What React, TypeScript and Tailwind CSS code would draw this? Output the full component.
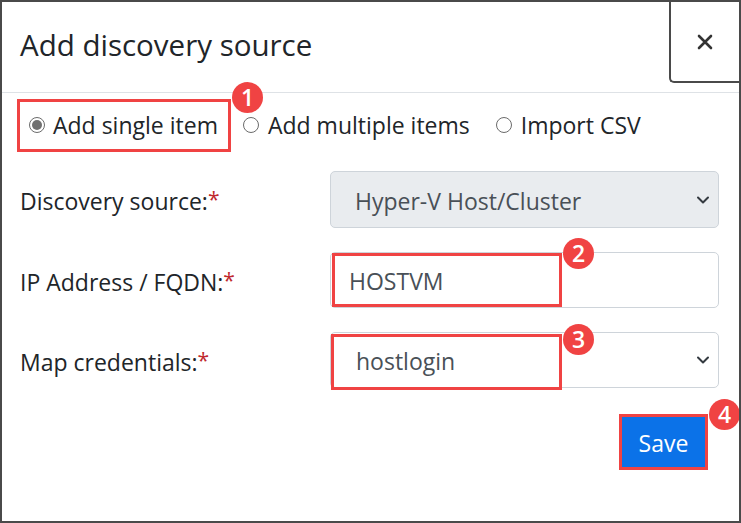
import React from "react";

const Badge = ({ n, className }: { n: string; className: string }) => (
  <div
    className={`absolute w-[31px] h-[31px] rounded-full bg-[#f04343] text-white flex items-center justify-center text-[23px] font-semibold leading-none ${className}`}
  >
    {n}
  </div>
);

const Chevron = () => (
  <svg width="14" height="9" viewBox="0 0 14 9" className="absolute right-[8px] top-1/2 -translate-y-1/2">
    <path d="M2 2l5 5 5-5" fill="none" stroke="#343a40" strokeWidth="2" strokeLinecap="round" strokeLinejoin="round" />
  </svg>
);

const Radio = ({ checked }: { checked?: boolean }) => (
  <span className="w-[16px] h-[16px] rounded-full border border-[#6b6b6b] bg-white flex items-center justify-center shrink-0">
    {checked && <span className="w-[10px] h-[10px] rounded-full bg-[#707070]" />}
  </span>
);

const Label = ({ text }: { text: string }) => (
  <div className="w-[310px] pt-[4px] text-[23px] text-[#212529]">
    {text}
    <span className="text-[#c0282d] text-[21px] align-top">*</span>
  </div>
);

export default function App() {
  return (
    <div
      className="w-[741px] h-[523px] bg-white border-2 border-[#4a4a4a] overflow-hidden relative"
      style={{ fontFamily: '"Open Sans", "Noto Sans", sans-serif' }}
    >
      {/* header */}
      <div className="flex h-[91px] border-b border-[#dee2e6]">
        <div className="flex-1 pl-[18px] pt-[24px] text-[29.5px] leading-[38px] text-[#212529]">
          Add discovery source
        </div>
        <div className="w-[70px] h-[81px] border-l-2 border-b-2 border-[#4a4a4a] rounded-bl-[5px] flex items-center justify-center">
          <svg width="16" height="16" viewBox="0 0 16 16">
            <path d="M2 2l12 12M14 2L2 14" stroke="#333" strokeWidth="2.6" strokeLinecap="round" />
          </svg>
        </div>
      </div>

      {/* body */}
      <div className="pl-[18px] pr-[20px]">
        {/* radio row */}
        <div className="relative flex items-center h-[64px] text-[23px] text-[#212529]">
          <div className="relative flex items-center gap-[8px] -ml-[3px] pl-[12px] h-[53px] pr-[13px]">
            <Radio checked />
            <span>Add single item</span>
            <div className="absolute inset-0 border-[3px] border-[#f04343]" />
            <Badge n="1" className="left-[215px] -top-[17px]" />
          </div>
          <div className="flex items-center gap-[9px] ml-[12px]">
            <Radio />
            <span>Add multiple items</span>
          </div>
          <div className="flex items-center gap-[9px] ml-[26px]">
            <Radio />
            <span>Import CSV</span>
          </div>
        </div>

        {/* rows */}
        <div className="flex flex-col gap-[24px] mt-[14px]">
          <div className="flex items-center">
            <Label text="Discovery source:" />
            <div className="relative flex-1 h-[57px] bg-[#e9ecef] border border-[#ced4da] rounded-[5px] flex items-center pl-[24px] pt-[3px] text-[23px] text-[#495057]">
              Hyper-V Host/Cluster
              <Chevron />
            </div>
          </div>

          <div className="flex items-center">
            <Label text="IP Address / FQDN:" />
            <div className="relative flex-1 h-[56px] bg-white border border-[#ced4da] rounded-[5px] flex items-center pl-[18px] pt-[3px] text-[23px] text-[#495057]">
              HOSTVM
              <div className="absolute left-[1px] top-0 w-[230px] h-[54px] border-[3px] border-[#f04343]" />
              <Badge n="2" className="left-[232px] -top-[15px]" />
            </div>
          </div>

          <div className="flex items-center">
            <Label text="Map credentials:" />
            <div className="relative flex-1 h-[56px] bg-white border border-[#ced4da] rounded-[5px] flex items-center pl-[25px] pt-[3px] text-[23px] text-[#495057]">
              hostlogin
              <Chevron />
              <div className="absolute left-0 top-[1px] w-[231px] h-[56px] border-[3px] border-[#f04343]" />
              <Badge n="3" className="left-[232px] -top-[9px]" />
            </div>
          </div>
        </div>

        {/* save */}
        <div className="flex justify-end mt-[26px] pr-[11px]">
          <div className="relative p-[3px] bg-[#f04343]">
            <button className="w-[83px] h-[50px] bg-[#0b72e8] text-white text-[23px] pt-[2px] flex items-center justify-center">
              Save
            </button>
            <Badge n="4" className="-right-[32px] -top-[15px]" />
          </div>
        </div>
      </div>
    </div>
  );
}
